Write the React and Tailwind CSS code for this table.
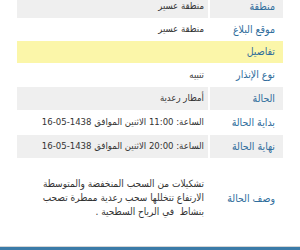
const rows = [
  { label: "منطقة", value: "منطقة عسير", bg: "bg-[#efefef]", h: "h-[23px]" },
  { label: "موقع البلاغ", value: "منطقة عسير", bg: "bg-white", h: "h-[23px]" },
]

const rows2 = [
  { label: "نوع الإنذار", value: "تنبيه", bg: "bg-white", h: "h-[24px]" },
  { label: "الحالة", value: "أمطار رعدية", bg: "bg-[#efefef]", h: "h-[23px]" },
  { label: "بداية الحالة", value: "الساعة: 11:00 الاثنين الموافق 1438-05-16", bg: "bg-white", h: "h-[25px]" },
  { label: "نهاية الحالة", value: "الساعة: 20:00 الاثنين الموافق 1438-05-16", bg: "bg-[#efefef]", h: "h-[23px]" },
]

function Row({ label, value, bg, h }) {
  return (
    <div className={`flex ${h}`}>
      <div className={`w-[73px] shrink-0 ${bg} flex items-center pr-[8px] text-[10.5px] text-[#2f6d9c]`}>{label}</div>
      <div className={`flex-1 min-w-0 overflow-hidden ${bg} border-r-2 border-white flex items-center pr-[4px] text-[9.5px] text-[#333] whitespace-nowrap`}>
        {value}
      </div>
    </div>
  )
}

export default function App() {
  return (
    <div
      dir="rtl"
      className="w-[300px] h-[250px] overflow-hidden bg-white flex flex-col"
      style={{ fontFamily: '"DejaVu Sans Condensed", "DejaVu Sans", sans-serif' }}
    >
      <div className="w-[266px] mx-auto -mt-[5px]">
        {rows.map((r) => (
          <Row key={r.label} {...r} />
        ))}
        <div className="h-[22px] bg-[#fbf6a9] flex items-center pr-[8px] text-[10.5px] text-[#2f6d9c]">تفاصيل</div>
        {rows2.map((r) => (
          <Row key={r.label} {...r} />
        ))}
        <div className="flex h-[80px]">
          <div className="w-[73px] shrink-0 flex items-center pr-[8px] pt-[2px] text-[10.5px] text-[#2f6d9c]">وصف الحالة</div>
          <div className="flex-1 min-w-0 overflow-hidden border-r-2 border-white flex flex-col justify-center pr-[4px] text-[10px] leading-[14px] text-[#333] whitespace-nowrap">
            <div>تشكيلات من السحب المنخفضة والمتوسطة</div>
            <div>الارتفاع تتخللها سحب رعدية ممطرة تصحب</div>
            <div>بنشاط&nbsp; في الرياح السطحية .</div>
          </div>
        </div>
      </div>
      <div className="mt-auto border-t border-[#d5d5d5] h-[4px] bg-[#3b7ba8]"></div>
    </div>
  )
}
